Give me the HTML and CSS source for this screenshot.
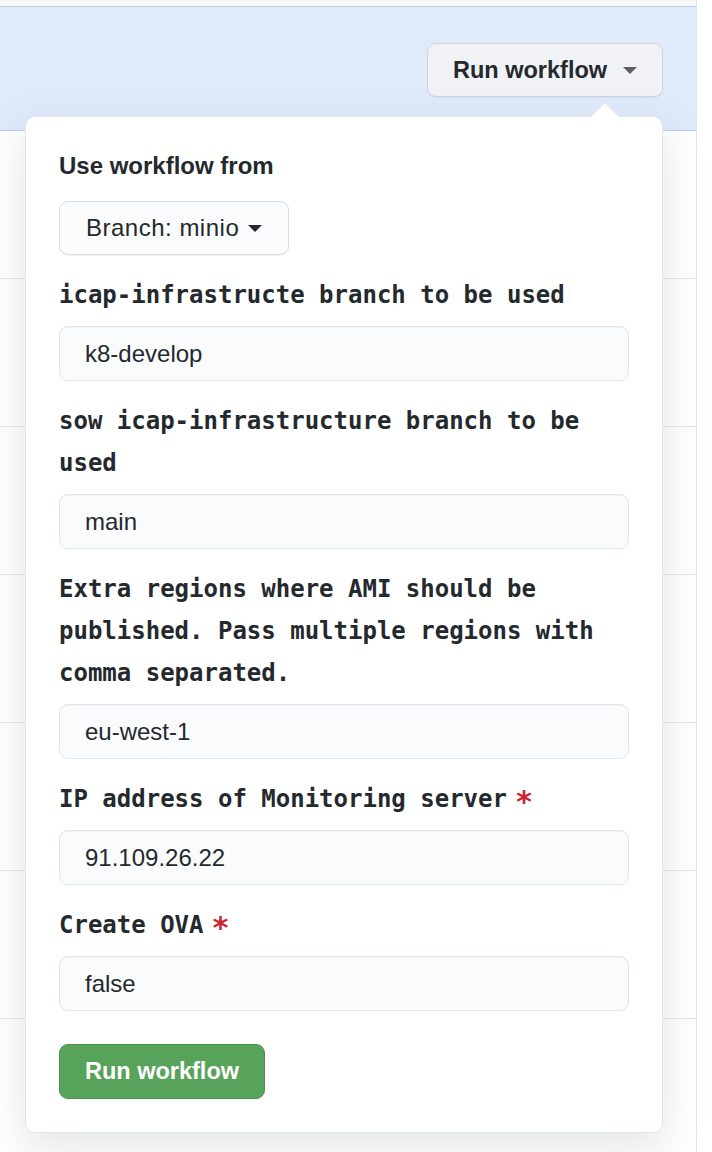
FILE: index.html
```html
<!DOCTYPE html>
<html lang="en">
<head>
<meta charset="utf-8">
<title>Run workflow</title>
<link rel="stylesheet" href="styles.css">
</head>
<body>
<div class="page">
  <div class="box">
    <div class="box-top"></div>
    <div class="box-blue">
      <button class="btn btn-run">Run workflow <span class="caret caret-gray"></span></button>
    </div>
    <div class="row"></div>
    <div class="row"></div>
    <div class="row"></div>
    <div class="row"></div>
    <div class="row"></div>
    <div class="row"></div>
    <div class="row"></div>
  </div>

  <div class="popover">
    <span class="popover-caret"></span>
    <div class="pop-title">Use workflow from</div>
    <button class="btn btn-branch">Branch: minio <span class="caret caret-dark"></span></button>

    <div class="field">
      <div class="lbl">icap-infrastructe branch to be used</div>
      <div class="input">k8-develop</div>
    </div>
    <div class="field">
      <div class="lbl">sow icap-infrastructure branch to be used</div>
      <div class="input">main</div>
    </div>
    <div class="field">
      <div class="lbl">Extra regions where AMI should be published. Pass multiple regions with comma separated.</div>
      <div class="input">eu-west-1</div>
    </div>
    <div class="field">
      <div class="lbl">IP address of Monitoring server<span class="req">*</span></div>
      <div class="input">91.109.26.22</div>
    </div>
    <div class="field">
      <div class="lbl">Create OVA<span class="req">*</span></div>
      <div class="input">false</div>
    </div>

    <button class="btn btn-primary">Run workflow</button>
  </div>
</div>
</body>
</html>
```

FILE: styles.css
```css
* { box-sizing: border-box; }

html, body {
  margin: 0;
  padding: 0;
  background: #ffffff;
}

body {
  font-family: "Liberation Sans", Arial, sans-serif;
  color: #24292e;
}

.page {
  position: relative;
  width: 712px;
  height: 1152px;
  overflow: hidden;
}

.box {
  width: 697px;
  border-right: 1px solid #e1e4e8;
  min-height: 1152px;
}

.box-top {
  height: 7px;
  background: #f6f8fa;
  border-bottom: 1px solid #b9cde8;
}

.box-blue {
  height: 124px;
  background: #dfeafa;
  border-bottom: 1px solid #b9cde8;
  display: flex;
  justify-content: flex-end;
  align-items: flex-start;
  padding: 36px 33px 0 0;
}

.row {
  height: 148px;
  border-bottom: 1px solid #e1e4e8;
}

.btn {
  display: inline-flex;
  align-items: center;
  height: 54px;
  padding: 0 25px;
  border: 1px solid rgba(27, 31, 35, 0.15);
  border-radius: 9px;
  font-family: "Liberation Sans", Arial, sans-serif;
  font-size: 23.5px;
  font-weight: 700;
  color: #24292e;
  white-space: nowrap;
  box-shadow: 0 1px 0 rgba(27, 31, 35, 0.05);
  cursor: pointer;
}

.btn-run {
  width: 236px;
  background: #f0f2f5;
  border-color: #d1d6dd;
  gap: 16px;
}

.caret {
  display: inline-block;
  width: 0;
  height: 0;
  border-top: 7px solid #24292e;
  border-left: 7.5px solid transparent;
  border-right: 7.5px solid transparent;
}

.caret-gray { border-top-color: #5a6067; }
.caret-dark { border-top-color: #24292e; }

.popover {
  position: absolute;
  top: 116px;
  left: 25px;
  width: 638px;
  background: #ffffff;
  border: 1px solid #e1e4e8;
  border-radius: 10px;
  padding: 31px 33px 33px;
  box-shadow: 0 14px 40px rgba(149, 157, 165, 0.28);
  display: flex;
  flex-direction: column;
  align-items: flex-start;
}

.popover-caret {
  position: absolute;
  top: -11px;
  left: 569px;
  width: 20px;
  height: 20px;
  background: #ffffff;
  border-top: 1px solid #e1e4e8;
  border-left: 1px solid #e1e4e8;
  transform: rotate(45deg);
}

.pop-title {
  font-size: 24px;
  line-height: 36px;
  font-weight: 700;
  color: #24292e;
}

.btn-branch {
  margin-top: 17px;
  width: 230px;
  background: #fafbfc;
  border-color: #d8dbdf;
  font-weight: 400;
  font-size: 24px;
  letter-spacing: 0.5px;
  gap: 9px;
  padding-left: 26px;
}

.field {
  width: 100%;
  margin-top: 19px;
}

.lbl {
  font-family: "DejaVu Sans Mono", "Liberation Mono", monospace;
  font-weight: 700;
  font-size: 24px;
  line-height: 42px;
  color: #24292e;
}

.req {
  color: #cb2431;
  font-size: 30px;
  margin-left: 8px;
  vertical-align: -5px;
  line-height: 0;
}

.input {
  margin-top: 10px;
  height: 55px;
  width: 100%;
  display: flex;
  align-items: center;
  padding: 0 25px;
  background: #fafbfc;
  border: 1px solid #e1e4e8;
  border-radius: 9px;
  font-size: 24px;
  color: #24292e;
  box-shadow: inset 0 1px 1px rgba(27, 31, 35, 0.03);
}

.btn-primary {
  margin-top: 33px;
  height: 55px;
  width: 206px;
  background: #58a35b;
  border-color: #4c8f4f;
  color: #ffffff;
  justify-content: center;
  padding: 0;
}
```
